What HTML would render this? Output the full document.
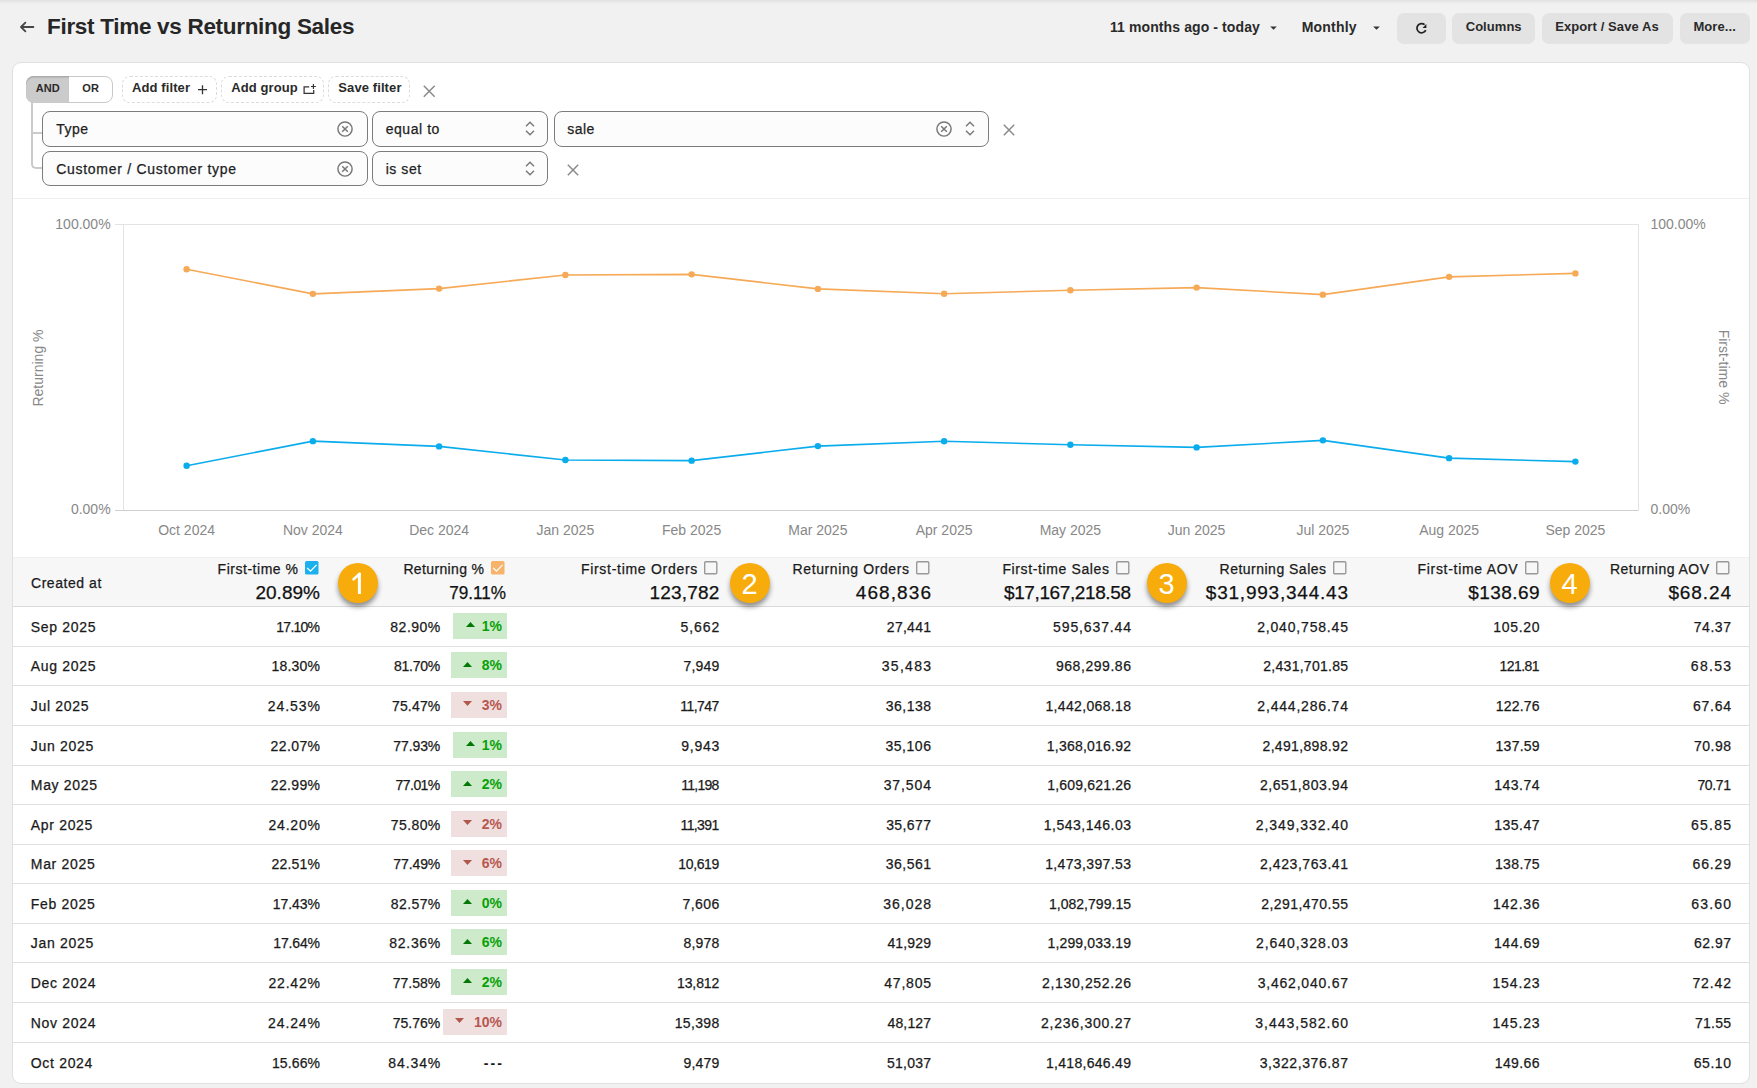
<!DOCTYPE html>
<html><head><meta charset="utf-8"><style>
html,body{margin:0;padding:0;}
body{width:1757px;height:1088px;overflow:hidden;background:#f1f1f1;position:relative;font-family:"Liberation Sans",sans-serif;}
.a{position:absolute;}
.t{position:absolute;white-space:nowrap;}
.k{-webkit-text-stroke:0.25px currentColor;}
svg.a{overflow:visible;}
</style></head><body>
<div class="a" style="left:0px;top:0px;width:1757px;height:4px;background:linear-gradient(#e1e1e1,#f1f1f1);"></div>
<svg class="a" style="left:18px;top:19px" width="18" height="16" viewBox="0 0 18 16"><path d="M15.4 8H3.2M7.4 3.6L3 8L7.4 12.4" fill="none" stroke="#464646" stroke-width="1.8" stroke-linecap="round" stroke-linejoin="round"/></svg>
<div class="t " style="top:12.50px;font-size:22.5px;line-height:28.12px;font-weight:700;color:#262626;letter-spacing:-0.301px;left:47.00px;">First Time vs Returning Sales</div>
<div class="t " style="top:19.00px;font-size:14px;line-height:17.5px;font-weight:700;color:#2a2a2a;letter-spacing:0.1px;left:1110.00px;">11 months ago - today</div>
<svg class="a" style="left:1269px;top:25px" width="9" height="6"><path d="M1.2 1.6H7.8L4.5 4.8z" fill="#333"/></svg>
<div class="t " style="top:19.00px;font-size:14px;line-height:17.5px;font-weight:700;color:#2a2a2a;letter-spacing:0.2px;left:1301.70px;">Monthly</div>
<svg class="a" style="left:1372px;top:25px" width="9" height="6"><path d="M1.2 1.6H7.8L4.5 4.8z" fill="#333"/></svg>
<div class="a" style="left:1397px;top:13px;width:49px;height:31px;background:#e3e3e3;border-radius:7px;"></div>
<div class="a" style="left:1452px;top:13px;width:83px;height:31px;background:#e3e3e3;border-radius:7px;"></div>
<div class="a" style="left:1542px;top:13px;width:131px;height:31px;background:#e3e3e3;border-radius:7px;"></div>
<div class="a" style="left:1680px;top:13px;width:70px;height:31px;background:#e3e3e3;border-radius:7px;"></div>
<svg class="a" style="left:1413px;top:21px" width="16" height="14" viewBox="0 0 16 14"><path d="M12.76 9.03A4.6 4.6 0 1 1 11.6 3.7" fill="none" stroke="#222" stroke-width="1.75"/><path d="M9.5 6.9L13.4 6.9L13.4 2.9z" fill="#222"/></svg>
<div class="t " style="top:19.00px;font-size:13px;line-height:16.25px;font-weight:700;color:#2a2a2a;letter-spacing:0.05px;left:1465.70px;">Columns</div>
<div class="t " style="top:19.00px;font-size:13px;line-height:16.25px;font-weight:700;color:#2a2a2a;letter-spacing:0.1px;left:1555.20px;">Export / Save As</div>
<div class="t " style="top:19.00px;font-size:13px;line-height:16.25px;font-weight:700;color:#2a2a2a;letter-spacing:0.1px;left:1693.40px;">More...</div>
<div class="a" style="left:12px;top:62px;width:1738px;height:1022px;background:#fff;border:1px solid #e0e0e0;border-radius:9px;box-sizing:border-box;"></div>
<div class="a" style="left:26px;top:76px;width:86.5px;height:26.5px;background:#fff;border:1px solid #c9c9c9;border-radius:8px;box-sizing:border-box;overflow:hidden;"></div>
<div class="a" style="left:26px;top:76px;width:43px;height:26.5px;background:#cbcbcb;border-radius:8px 0 0 8px;box-shadow:inset 0 1.5px 1px #a9a9a9;"></div>
<div class="t " style="top:82.00px;font-size:11px;line-height:13.75px;font-weight:700;color:#2a2a2a;letter-spacing:0.1px;left:-352.25px;width:800px;text-align:center;">AND</div>
<div class="t " style="top:82.00px;font-size:11px;line-height:13.75px;font-weight:700;color:#2a2a2a;letter-spacing:0.2px;left:-309.30px;width:800px;text-align:center;">OR</div>
<div class="a" style="left:121.5px;top:76px;width:95.30000000000001px;height:27px;border:1px dashed #dcdcdc;border-radius:8px;box-sizing:border-box;"></div>
<div class="a" style="left:221.2px;top:76px;width:103.0px;height:27px;border:1px dashed #dcdcdc;border-radius:8px;box-sizing:border-box;"></div>
<div class="a" style="left:328.2px;top:76px;width:82.0px;height:27px;border:1px dashed #dcdcdc;border-radius:8px;box-sizing:border-box;"></div>
<div class="t " style="top:80.00px;font-size:13px;line-height:16.25px;font-weight:700;color:#2a2a2a;letter-spacing:0.1px;left:132.00px;">Add filter</div>
<svg class="a" style="left:197px;top:84px" width="11" height="11"><path d="M5.5 1.2V10.2M1 5.7H10" stroke="#333" stroke-width="1.3"/></svg>
<div class="t " style="top:80.00px;font-size:13px;line-height:16.25px;font-weight:700;color:#2a2a2a;letter-spacing:0.1px;left:231.30px;">Add group</div>
<svg class="a" style="left:303px;top:83px" width="14" height="12"><path d="M6.2 3.8H1.1V10.4H10.7V7" fill="none" stroke="#333" stroke-width="1.25"/><path d="M10.4 1.1V5.9M8 3.5H12.8" stroke="#333" stroke-width="1.15"/></svg>
<div class="t " style="top:80.00px;font-size:13px;line-height:16.25px;font-weight:700;color:#2a2a2a;letter-spacing:0.1px;left:338.30px;">Save filter</div>
<svg class="a" style="left:423px;top:84.5px" width="12.5" height="12.5"><path d="M0.8 0.8L11.7 11.7M11.7 0.8L0.8 11.7" stroke="#8a8a8a" stroke-width="1.5"/></svg>
<div class="a" style="left:31px;top:102px;width:11px;height:66.5px;border-left:2px solid #cacaca;border-bottom:2px solid #cacaca;border-bottom-left-radius:5px;box-sizing:border-box;"></div>
<div class="a" style="left:31px;top:132px;width:11px;height:2px;background:#cacaca;"></div>
<div class="a" style="left:42px;top:111px;width:325.5px;height:36px;background:#fcfcfd;border:1px solid #7c7c7c;border-radius:8px;box-sizing:border-box;"></div>
<div class="a" style="left:372.4px;top:111px;width:176.0px;height:36px;background:#fcfcfd;border:1px solid #7c7c7c;border-radius:8px;box-sizing:border-box;"></div>
<div class="a" style="left:554.2px;top:111px;width:434.5999999999999px;height:36px;background:#fcfcfd;border:1px solid #7c7c7c;border-radius:8px;box-sizing:border-box;"></div>
<div class="a" style="left:42px;top:151px;width:325.5px;height:34.5px;background:#fcfcfd;border:1px solid #7c7c7c;border-radius:8px;box-sizing:border-box;"></div>
<div class="a" style="left:372.4px;top:151px;width:176.0px;height:34.5px;background:#fcfcfd;border:1px solid #7c7c7c;border-radius:8px;box-sizing:border-box;"></div>
<div class="t k" style="top:121.00px;font-size:14px;line-height:17.5px;font-weight:400;color:#1e1e1e;letter-spacing:0.5px;left:56.20px;">Type</div>
<div class="t k" style="top:161.00px;font-size:14px;line-height:17.5px;font-weight:400;color:#1e1e1e;letter-spacing:0.72px;left:56.20px;">Customer / Customer type</div>
<div class="t k" style="top:121.00px;font-size:14px;line-height:17.5px;font-weight:400;color:#1e1e1e;letter-spacing:0.55px;left:385.70px;">equal to</div>
<div class="t k" style="top:161.00px;font-size:14px;line-height:17.5px;font-weight:400;color:#1e1e1e;letter-spacing:0.55px;left:385.70px;">is set</div>
<div class="t k" style="top:121.00px;font-size:14px;line-height:17.5px;font-weight:400;color:#1e1e1e;letter-spacing:0.5px;left:567.20px;">sale</div>
<svg class="a" style="left:336px;top:119.80000000000001px" width="18" height="18"><circle cx="9" cy="9" r="7.1" fill="none" stroke="#777" stroke-width="1.45"/><path d="M6.2 6.2L11.8 11.8M11.8 6.2L6.2 11.8" stroke="#777" stroke-width="1.5"/></svg>
<svg class="a" style="left:336px;top:159.6px" width="18" height="18"><circle cx="9" cy="9" r="7.1" fill="none" stroke="#777" stroke-width="1.45"/><path d="M6.2 6.2L11.8 11.8M11.8 6.2L6.2 11.8" stroke="#777" stroke-width="1.5"/></svg>
<svg class="a" style="left:935.3px;top:119.69999999999999px" width="18" height="18"><circle cx="9" cy="9" r="7.1" fill="none" stroke="#777" stroke-width="1.45"/><path d="M6.2 6.2L11.8 11.8M11.8 6.2L6.2 11.8" stroke="#777" stroke-width="1.5"/></svg>
<svg class="a" style="left:525px;top:121.4px" width="10" height="15"><path d="M1 5.2L5 1.2L9 5.2M1 9.8L5 13.8L9 9.8" fill="none" stroke="#777" stroke-width="1.4"/></svg>
<svg class="a" style="left:525px;top:161.0px" width="10" height="15"><path d="M1 5.2L5 1.2L9 5.2M1 9.8L5 13.8L9 9.8" fill="none" stroke="#777" stroke-width="1.4"/></svg>
<svg class="a" style="left:965px;top:121.4px" width="10" height="15"><path d="M1 5.2L5 1.2L9 5.2M1 9.8L5 13.8L9 9.8" fill="none" stroke="#777" stroke-width="1.4"/></svg>
<svg class="a" style="left:1002.8px;top:124.3px" width="12" height="12"><path d="M0.8 0.8L11.2 11.2M11.2 0.8L0.8 11.2" stroke="#8a8a8a" stroke-width="1.5"/></svg>
<svg class="a" style="left:567px;top:164px" width="12" height="12"><path d="M0.8 0.8L11.2 11.2M11.2 0.8L0.8 11.2" stroke="#8a8a8a" stroke-width="1.5"/></svg>
<div class="a" style="left:13px;top:198px;width:1736px;height:1px;background:#eeeeee;"></div>
<svg class="a" style="left:0;top:0" width="1757" height="1088"><path d="M115 224.5H1638.5V510.5" fill="none" stroke="#e3e3e3" stroke-width="1"/><path d="M123.5 224.5V510.5" fill="none" stroke="#e3e3e3" stroke-width="1"/><path d="M115 510.5H1638.5" fill="none" stroke="#cfcfcf" stroke-width="1"/><polyline points="186.62,269.29 312.88,293.83 439.12,288.62 565.38,274.95 691.62,274.35 817.88,288.88 944.12,293.71 1070.38,290.25 1196.62,287.62 1322.88,294.66 1449.12,276.84 1575.38,273.41" fill="none" stroke="#f6a956" stroke-width="1.6"/><circle cx="186.62" cy="269.29" r="3.2" fill="#f6a956"/><circle cx="312.88" cy="293.83" r="3.2" fill="#f6a956"/><circle cx="439.12" cy="288.62" r="3.2" fill="#f6a956"/><circle cx="565.38" cy="274.95" r="3.2" fill="#f6a956"/><circle cx="691.62" cy="274.35" r="3.2" fill="#f6a956"/><circle cx="817.88" cy="288.88" r="3.2" fill="#f6a956"/><circle cx="944.12" cy="293.71" r="3.2" fill="#f6a956"/><circle cx="1070.38" cy="290.25" r="3.2" fill="#f6a956"/><circle cx="1196.62" cy="287.62" r="3.2" fill="#f6a956"/><circle cx="1322.88" cy="294.66" r="3.2" fill="#f6a956"/><circle cx="1449.12" cy="276.84" r="3.2" fill="#f6a956"/><circle cx="1575.38" cy="273.41" r="3.2" fill="#f6a956"/><polyline points="186.62,465.71 312.88,441.17 439.12,446.38 565.38,460.05 691.62,460.65 817.88,446.12 944.12,441.29 1070.38,444.75 1196.62,447.38 1322.88,440.34 1449.12,458.16 1575.38,461.59" fill="none" stroke="#0aacec" stroke-width="1.6"/><circle cx="186.62" cy="465.71" r="3.2" fill="#0aacec"/><circle cx="312.88" cy="441.17" r="3.2" fill="#0aacec"/><circle cx="439.12" cy="446.38" r="3.2" fill="#0aacec"/><circle cx="565.38" cy="460.05" r="3.2" fill="#0aacec"/><circle cx="691.62" cy="460.65" r="3.2" fill="#0aacec"/><circle cx="817.88" cy="446.12" r="3.2" fill="#0aacec"/><circle cx="944.12" cy="441.29" r="3.2" fill="#0aacec"/><circle cx="1070.38" cy="444.75" r="3.2" fill="#0aacec"/><circle cx="1196.62" cy="447.38" r="3.2" fill="#0aacec"/><circle cx="1322.88" cy="440.34" r="3.2" fill="#0aacec"/><circle cx="1449.12" cy="458.16" r="3.2" fill="#0aacec"/><circle cx="1575.38" cy="461.59" r="3.2" fill="#0aacec"/></svg>
<div class="t " style="top:216.00px;font-size:14px;line-height:17.5px;font-weight:400;color:#888;left:-689.40px;width:800px;text-align:right;">100.00%</div>
<div class="t " style="top:501.00px;font-size:14px;line-height:17.5px;font-weight:400;color:#888;left:-689.40px;width:800px;text-align:right;">0.00%</div>
<div class="t " style="top:216.00px;font-size:14px;line-height:17.5px;font-weight:400;color:#888;left:1650.50px;">100.00%</div>
<div class="t " style="top:501.00px;font-size:14px;line-height:17.5px;font-weight:400;color:#888;left:1650.50px;">0.00%</div>
<div class="t " style="top:522.00px;font-size:14px;line-height:17.5px;font-weight:400;color:#888;left:-213.38px;width:800px;text-align:center;">Oct 2024</div>
<div class="t " style="top:522.00px;font-size:14px;line-height:17.5px;font-weight:400;color:#888;left:-87.12px;width:800px;text-align:center;">Nov 2024</div>
<div class="t " style="top:522.00px;font-size:14px;line-height:17.5px;font-weight:400;color:#888;left:39.12px;width:800px;text-align:center;">Dec 2024</div>
<div class="t " style="top:522.00px;font-size:14px;line-height:17.5px;font-weight:400;color:#888;left:165.38px;width:800px;text-align:center;">Jan 2025</div>
<div class="t " style="top:522.00px;font-size:14px;line-height:17.5px;font-weight:400;color:#888;left:291.62px;width:800px;text-align:center;">Feb 2025</div>
<div class="t " style="top:522.00px;font-size:14px;line-height:17.5px;font-weight:400;color:#888;left:417.88px;width:800px;text-align:center;">Mar 2025</div>
<div class="t " style="top:522.00px;font-size:14px;line-height:17.5px;font-weight:400;color:#888;left:544.12px;width:800px;text-align:center;">Apr 2025</div>
<div class="t " style="top:522.00px;font-size:14px;line-height:17.5px;font-weight:400;color:#888;left:670.38px;width:800px;text-align:center;">May 2025</div>
<div class="t " style="top:522.00px;font-size:14px;line-height:17.5px;font-weight:400;color:#888;left:796.62px;width:800px;text-align:center;">Jun 2025</div>
<div class="t " style="top:522.00px;font-size:14px;line-height:17.5px;font-weight:400;color:#888;left:922.88px;width:800px;text-align:center;">Jul 2025</div>
<div class="t " style="top:522.00px;font-size:14px;line-height:17.5px;font-weight:400;color:#888;left:1049.12px;width:800px;text-align:center;">Aug 2025</div>
<div class="t " style="top:522.00px;font-size:14px;line-height:17.5px;font-weight:400;color:#888;left:1175.38px;width:800px;text-align:center;">Sep 2025</div>
<div class="t" style="left:38px;top:367.8px;font-size:14px;line-height:14px;color:#888;transform:translate(-50%,-50%) rotate(-90deg);">Returning %</div>
<div class="t" style="left:1724px;top:367.2px;font-size:14px;line-height:14px;color:#888;transform:translate(-50%,-50%) rotate(90deg);">First-time %</div>
<div class="a" style="left:13px;top:557px;width:1736px;height:1px;background:#efefef;"></div>
<div class="a" style="left:13px;top:558px;width:1736px;height:48px;background:#f7f7f7;"></div>
<div class="a" style="left:13px;top:606px;width:1736px;height:1px;background:#d9d9d9;"></div>
<div class="t k" style="top:575.00px;font-size:14px;line-height:17.5px;font-weight:400;color:#1a1a1a;letter-spacing:0.55px;left:31.00px;">Created at</div>
<svg class="a" style="left:305px;top:561px" width="13.5" height="13.5"><rect width="13.5" height="13.5" rx="1.5" fill="#1cb1ee"/><path d="M2.1 6.9L5.5 10.2L11.6 3.9" fill="none" stroke="#fff" stroke-width="1.3"/></svg>
<div class="t k" style="top:561.00px;font-size:14px;line-height:17.5px;font-weight:400;color:#1a1a1a;letter-spacing:0.522px;left:-501.48px;width:800px;text-align:right;">First-time %</div>
<div class="t k" style="top:581.00px;font-size:19px;line-height:23.75px;font-weight:400;color:#111;letter-spacing:0.032px;left:-479.97px;width:800px;text-align:right;">20.89%</div>
<svg class="a" style="left:491px;top:561px" width="13.5" height="13.5"><rect width="13.5" height="13.5" rx="1.5" fill="#f8b36b"/><path d="M2.1 6.9L5.5 10.2L11.6 3.9" fill="none" stroke="#fff" stroke-width="1.3"/></svg>
<div class="t k" style="top:561.00px;font-size:14px;line-height:17.5px;font-weight:400;color:#1a1a1a;letter-spacing:0.356px;left:-315.64px;width:800px;text-align:right;">Returning %</div>
<div class="t k" style="top:581.00px;font-size:19px;line-height:23.75px;font-weight:400;color:#111;left:-294.00px;width:800px;text-align:right;transform:scaleX(0.9011);transform-origin:100% 50%;">79.11%</div>
<svg class="a" style="left:704.3px;top:561px" width="13.5" height="13.5"><rect x="0.7" y="0.7" width="12.1" height="12.1" rx="1" fill="none" stroke="#999" stroke-width="1.4"/></svg>
<div class="t k" style="top:561.00px;font-size:14px;line-height:17.5px;font-weight:400;color:#1a1a1a;letter-spacing:0.713px;left:-101.99px;width:800px;text-align:right;">First-time Orders</div>
<div class="t k" style="top:581.00px;font-size:19px;line-height:23.75px;font-weight:400;color:#111;letter-spacing:0.203px;left:-80.50px;width:800px;text-align:right;">123,782</div>
<svg class="a" style="left:916px;top:561px" width="13.5" height="13.5"><rect x="0.7" y="0.7" width="12.1" height="12.1" rx="1" fill="none" stroke="#999" stroke-width="1.4"/></svg>
<div class="t k" style="top:561.00px;font-size:14px;line-height:17.5px;font-weight:400;color:#1a1a1a;letter-spacing:0.601px;left:109.60px;width:800px;text-align:right;">Returning Orders</div>
<div class="t k" style="top:581.00px;font-size:19px;line-height:23.75px;font-weight:400;color:#111;letter-spacing:1.086px;left:132.09px;width:800px;text-align:right;">468,836</div>
<svg class="a" style="left:1116px;top:561px" width="13.5" height="13.5"><rect x="0.7" y="0.7" width="12.1" height="12.1" rx="1" fill="none" stroke="#999" stroke-width="1.4"/></svg>
<div class="t k" style="top:561.00px;font-size:14px;line-height:17.5px;font-weight:400;color:#1a1a1a;letter-spacing:0.624px;left:309.62px;width:800px;text-align:right;">First-time Sales</div>
<div class="t k" style="top:581.00px;font-size:19px;line-height:23.75px;font-weight:400;color:#111;letter-spacing:-0.39px;left:330.61px;width:800px;text-align:right;">$17,167,218.58</div>
<svg class="a" style="left:1333px;top:561px" width="13.5" height="13.5"><rect x="0.7" y="0.7" width="12.1" height="12.1" rx="1" fill="none" stroke="#999" stroke-width="1.4"/></svg>
<div class="t k" style="top:561.00px;font-size:14px;line-height:17.5px;font-weight:400;color:#1a1a1a;letter-spacing:0.485px;left:526.49px;width:800px;text-align:right;">Returning Sales</div>
<div class="t k" style="top:581.00px;font-size:19px;line-height:23.75px;font-weight:400;color:#111;letter-spacing:0.779px;left:548.78px;width:800px;text-align:right;">$31,993,344.43</div>
<svg class="a" style="left:1524.6px;top:561px" width="13.5" height="13.5"><rect x="0.7" y="0.7" width="12.1" height="12.1" rx="1" fill="none" stroke="#999" stroke-width="1.4"/></svg>
<div class="t k" style="top:561.00px;font-size:14px;line-height:17.5px;font-weight:400;color:#1a1a1a;letter-spacing:0.7px;left:718.30px;width:800px;text-align:right;">First-time AOV</div>
<div class="t k" style="top:581.00px;font-size:19px;line-height:23.75px;font-weight:400;color:#111;letter-spacing:0.436px;left:740.04px;width:800px;text-align:right;">$138.69</div>
<svg class="a" style="left:1716px;top:561px" width="13.5" height="13.5"><rect x="0.7" y="0.7" width="12.1" height="12.1" rx="1" fill="none" stroke="#999" stroke-width="1.4"/></svg>
<div class="t k" style="top:561.00px;font-size:14px;line-height:17.5px;font-weight:400;color:#1a1a1a;letter-spacing:0.468px;left:909.47px;width:800px;text-align:right;">Returning AOV</div>
<div class="t k" style="top:581.00px;font-size:19px;line-height:23.75px;font-weight:400;color:#111;letter-spacing:0.897px;left:931.90px;width:800px;text-align:right;">$68.24</div>
<div class="a" style="left:338px;top:563px;width:40px;height:40px;border-radius:50%;background:#f8ac0b;box-shadow:0 4px 5px rgba(0,0,0,0.42);"></div>
<svg class="a" style="left:0;top:0" width="1" height="1"><path d="M359.4 572.9V594" stroke="#fff" stroke-width="3"/><path d="M359.7 573.8L353.6 579.3" stroke="#fff" stroke-width="2.6" stroke-linecap="round"/></svg>
<div class="a" style="left:730px;top:563px;width:40px;height:40px;border-radius:50%;background:#f8ac0b;box-shadow:0 4px 5px rgba(0,0,0,0.42);"></div>
<div class="t " style="top:566.00px;font-size:29px;line-height:36.25px;font-weight:400;color:#fff;left:349.50px;width:800px;text-align:center;">2</div>
<div class="a" style="left:1147px;top:563px;width:40px;height:40px;border-radius:50%;background:#f8ac0b;box-shadow:0 4px 5px rgba(0,0,0,0.42);"></div>
<div class="t " style="top:566.00px;font-size:29px;line-height:36.25px;font-weight:400;color:#fff;left:766.50px;width:800px;text-align:center;">3</div>
<div class="a" style="left:1550px;top:563px;width:40px;height:40px;border-radius:50%;background:#f8ac0b;box-shadow:0 4px 5px rgba(0,0,0,0.42);"></div>
<div class="t " style="top:566.00px;font-size:29px;line-height:36.25px;font-weight:400;color:#fff;left:1169.50px;width:800px;text-align:center;">4</div>
<div class="a" style="left:13px;top:646px;width:1736px;height:1px;background:#e0e0e0;"></div>
<div class="t k" style="top:619.00px;font-size:14px;line-height:17.5px;font-weight:400;color:#1a1a1a;letter-spacing:0.68px;left:30.80px;">Sep 2025</div>
<div class="t k" style="top:619.00px;font-size:14px;line-height:17.5px;font-weight:400;color:#1a1a1a;letter-spacing:-0.762px;left:-480.76px;width:800px;text-align:right;">17.10%</div>
<div class="t k" style="top:619.00px;font-size:14px;line-height:17.5px;font-weight:400;color:#1a1a1a;letter-spacing:0.494px;left:-359.21px;width:800px;text-align:right;">82.90%</div>
<div class="a" style="left:452.9px;top:613px;width:54px;height:26px;background:#cdebcb;"></div>
<div class="t " style="top:618.00px;font-size:14px;line-height:17.5px;font-weight:700;color:#08a008;left:-298.00px;width:800px;text-align:right;">1%</div>
<svg class="a" style="left:465.90px;top:622.00px" width="9" height="5"><path d="M0 5L4.5 0L9 5z" fill="#047804"/></svg>
<div class="t k" style="top:619.00px;font-size:14px;line-height:17.5px;font-weight:400;color:#1a1a1a;letter-spacing:0.944px;left:-79.76px;width:800px;text-align:right;">5,662</div>
<div class="t k" style="top:619.00px;font-size:14px;line-height:17.5px;font-weight:400;color:#1a1a1a;letter-spacing:0.266px;left:131.27px;width:800px;text-align:right;">27,441</div>
<div class="t k" style="top:619.00px;font-size:14px;line-height:17.5px;font-weight:400;color:#1a1a1a;letter-spacing:0.869px;left:331.87px;width:800px;text-align:right;">595,637.44</div>
<div class="t k" style="top:619.00px;font-size:14px;line-height:17.5px;font-weight:400;color:#1a1a1a;letter-spacing:0.824px;left:548.82px;width:800px;text-align:right;">2,040,758.45</div>
<div class="t k" style="top:619.00px;font-size:14px;line-height:17.5px;font-weight:400;color:#1a1a1a;letter-spacing:0.712px;left:740.31px;width:800px;text-align:right;">105.20</div>
<div class="t k" style="top:619.00px;font-size:14px;line-height:17.5px;font-weight:400;color:#1a1a1a;letter-spacing:0.544px;left:931.54px;width:800px;text-align:right;">74.37</div>
<div class="a" style="left:13px;top:685px;width:1736px;height:1px;background:#e0e0e0;"></div>
<div class="t k" style="top:658.00px;font-size:14px;line-height:17.5px;font-weight:400;color:#1a1a1a;letter-spacing:0.68px;left:30.80px;">Aug 2025</div>
<div class="t k" style="top:658.00px;font-size:14px;line-height:17.5px;font-weight:400;color:#1a1a1a;letter-spacing:0.186px;left:-479.81px;width:800px;text-align:right;">18.30%</div>
<div class="t k" style="top:658.00px;font-size:14px;line-height:17.5px;font-weight:400;color:#1a1a1a;letter-spacing:-0.244px;left:-359.94px;width:800px;text-align:right;">81.70%</div>
<div class="a" style="left:450.9px;top:652px;width:56px;height:26px;background:#cdebcb;"></div>
<div class="t " style="top:657.00px;font-size:14px;line-height:17.5px;font-weight:700;color:#08a008;left:-298.00px;width:800px;text-align:right;">8%</div>
<svg class="a" style="left:462.90px;top:661.50px" width="9" height="5"><path d="M0 5L4.5 0L9 5z" fill="#047804"/></svg>
<div class="t k" style="top:658.00px;font-size:14px;line-height:17.5px;font-weight:400;color:#1a1a1a;letter-spacing:0.192px;left:-80.51px;width:800px;text-align:right;">7,949</div>
<div class="t k" style="top:658.00px;font-size:14px;line-height:17.5px;font-weight:400;color:#1a1a1a;letter-spacing:1.274px;left:132.27px;width:800px;text-align:right;">35,483</div>
<div class="t k" style="top:658.00px;font-size:14px;line-height:17.5px;font-weight:400;color:#1a1a1a;letter-spacing:0.555px;left:331.56px;width:800px;text-align:right;">968,299.86</div>
<div class="t k" style="top:658.00px;font-size:14px;line-height:17.5px;font-weight:400;color:#1a1a1a;letter-spacing:0.267px;left:548.27px;width:800px;text-align:right;">2,431,701.85</div>
<div class="t k" style="top:658.00px;font-size:14px;line-height:17.5px;font-weight:400;color:#1a1a1a;letter-spacing:-0.562px;left:739.04px;width:800px;text-align:right;">121.81</div>
<div class="t k" style="top:658.00px;font-size:14px;line-height:17.5px;font-weight:400;color:#1a1a1a;letter-spacing:1.272px;left:932.27px;width:800px;text-align:right;">68.53</div>
<div class="a" style="left:13px;top:725px;width:1736px;height:1px;background:#e0e0e0;"></div>
<div class="t k" style="top:698.00px;font-size:14px;line-height:17.5px;font-weight:400;color:#1a1a1a;letter-spacing:0.68px;left:30.80px;">Jul 2025</div>
<div class="t k" style="top:698.00px;font-size:14px;line-height:17.5px;font-weight:400;color:#1a1a1a;letter-spacing:0.96px;left:-479.04px;width:800px;text-align:right;">24.53%</div>
<div class="t k" style="top:698.00px;font-size:14px;line-height:17.5px;font-weight:400;color:#1a1a1a;letter-spacing:0.176px;left:-359.52px;width:800px;text-align:right;">75.47%</div>
<div class="a" style="left:450.9px;top:692px;width:56px;height:26px;background:#f0dfdf;"></div>
<div class="t " style="top:697.00px;font-size:14px;line-height:17.5px;font-weight:700;color:#b6584f;left:-298.00px;width:800px;text-align:right;">3%</div>
<svg class="a" style="left:462.90px;top:701.00px" width="9" height="5"><path d="M0 0L4.5 5L9 0z" fill="#b0584e"/></svg>
<div class="t k" style="top:698.00px;font-size:14px;line-height:17.5px;font-weight:400;color:#1a1a1a;letter-spacing:-0.536px;left:-81.24px;width:800px;text-align:right;">11,747</div>
<div class="t k" style="top:698.00px;font-size:14px;line-height:17.5px;font-weight:400;color:#1a1a1a;letter-spacing:0.494px;left:131.49px;width:800px;text-align:right;">36,138</div>
<div class="t k" style="top:698.00px;font-size:14px;line-height:17.5px;font-weight:400;color:#1a1a1a;letter-spacing:0.351px;left:331.35px;width:800px;text-align:right;">1,442,068.18</div>
<div class="t k" style="top:698.00px;font-size:14px;line-height:17.5px;font-weight:400;color:#1a1a1a;letter-spacing:0.809px;left:548.81px;width:800px;text-align:right;">2,444,286.74</div>
<div class="t k" style="top:698.00px;font-size:14px;line-height:17.5px;font-weight:400;color:#1a1a1a;letter-spacing:0.226px;left:739.83px;width:800px;text-align:right;">122.76</div>
<div class="t k" style="top:698.00px;font-size:14px;line-height:17.5px;font-weight:400;color:#1a1a1a;letter-spacing:0.752px;left:931.75px;width:800px;text-align:right;">67.64</div>
<div class="a" style="left:13px;top:765px;width:1736px;height:1px;background:#e0e0e0;"></div>
<div class="t k" style="top:738.00px;font-size:14px;line-height:17.5px;font-weight:400;color:#1a1a1a;letter-spacing:0.68px;left:30.80px;">Jun 2025</div>
<div class="t k" style="top:738.00px;font-size:14px;line-height:17.5px;font-weight:400;color:#1a1a1a;letter-spacing:0.382px;left:-479.62px;width:800px;text-align:right;">22.07%</div>
<div class="t k" style="top:738.00px;font-size:14px;line-height:17.5px;font-weight:400;color:#1a1a1a;letter-spacing:-0.088px;left:-359.79px;width:800px;text-align:right;">77.93%</div>
<div class="a" style="left:452.9px;top:732px;width:54px;height:26px;background:#cdebcb;"></div>
<div class="t " style="top:737.00px;font-size:14px;line-height:17.5px;font-weight:700;color:#08a008;left:-298.00px;width:800px;text-align:right;">1%</div>
<svg class="a" style="left:465.90px;top:741.00px" width="9" height="5"><path d="M0 5L4.5 0L9 5z" fill="#047804"/></svg>
<div class="t k" style="top:738.00px;font-size:14px;line-height:17.5px;font-weight:400;color:#1a1a1a;letter-spacing:0.729px;left:-79.97px;width:800px;text-align:right;">9,943</div>
<div class="t k" style="top:738.00px;font-size:14px;line-height:17.5px;font-weight:400;color:#1a1a1a;letter-spacing:0.544px;left:131.54px;width:800px;text-align:right;">35,106</div>
<div class="t k" style="top:738.00px;font-size:14px;line-height:17.5px;font-weight:400;color:#1a1a1a;letter-spacing:0.223px;left:331.22px;width:800px;text-align:right;">1,368,016.92</div>
<div class="t k" style="top:738.00px;font-size:14px;line-height:17.5px;font-weight:400;color:#1a1a1a;letter-spacing:0.34px;left:548.34px;width:800px;text-align:right;">2,491,898.92</div>
<div class="t k" style="top:738.00px;font-size:14px;line-height:17.5px;font-weight:400;color:#1a1a1a;letter-spacing:0.238px;left:739.84px;width:800px;text-align:right;">137.59</div>
<div class="t k" style="top:738.00px;font-size:14px;line-height:17.5px;font-weight:400;color:#1a1a1a;letter-spacing:0.489px;left:931.49px;width:800px;text-align:right;">70.98</div>
<div class="a" style="left:13px;top:804px;width:1736px;height:1px;background:#e0e0e0;"></div>
<div class="t k" style="top:777.00px;font-size:14px;line-height:17.5px;font-weight:400;color:#1a1a1a;letter-spacing:0.68px;left:30.80px;">May 2025</div>
<div class="t k" style="top:777.00px;font-size:14px;line-height:17.5px;font-weight:400;color:#1a1a1a;letter-spacing:0.356px;left:-479.64px;width:800px;text-align:right;">22.99%</div>
<div class="t k" style="top:777.00px;font-size:14px;line-height:17.5px;font-weight:400;color:#1a1a1a;letter-spacing:-0.544px;left:-360.24px;width:800px;text-align:right;">77.01%</div>
<div class="a" style="left:450.9px;top:771px;width:56px;height:26px;background:#cdebcb;"></div>
<div class="t " style="top:776.00px;font-size:14px;line-height:17.5px;font-weight:700;color:#08a008;left:-298.00px;width:800px;text-align:right;">2%</div>
<svg class="a" style="left:462.90px;top:780.50px" width="9" height="5"><path d="M0 5L4.5 0L9 5z" fill="#047804"/></svg>
<div class="t k" style="top:777.00px;font-size:14px;line-height:17.5px;font-weight:400;color:#1a1a1a;letter-spacing:-0.726px;left:-81.43px;width:800px;text-align:right;">11,198</div>
<div class="t k" style="top:777.00px;font-size:14px;line-height:17.5px;font-weight:400;color:#1a1a1a;letter-spacing:0.902px;left:131.90px;width:800px;text-align:right;">37,504</div>
<div class="t k" style="top:777.00px;font-size:14px;line-height:17.5px;font-weight:400;color:#1a1a1a;letter-spacing:0.187px;left:331.19px;width:800px;text-align:right;">1,609,621.26</div>
<div class="t k" style="top:777.00px;font-size:14px;line-height:17.5px;font-weight:400;color:#1a1a1a;letter-spacing:0.577px;left:548.58px;width:800px;text-align:right;">2,651,803.94</div>
<div class="t k" style="top:777.00px;font-size:14px;line-height:17.5px;font-weight:400;color:#1a1a1a;letter-spacing:0.526px;left:740.13px;width:800px;text-align:right;">143.74</div>
<div class="t k" style="top:777.00px;font-size:14px;line-height:17.5px;font-weight:400;color:#1a1a1a;letter-spacing:-0.366px;left:930.63px;width:800px;text-align:right;">70.71</div>
<div class="a" style="left:13px;top:844px;width:1736px;height:1px;background:#e0e0e0;"></div>
<div class="t k" style="top:817.00px;font-size:14px;line-height:17.5px;font-weight:400;color:#1a1a1a;letter-spacing:0.68px;left:30.80px;">Apr 2025</div>
<div class="t k" style="top:817.00px;font-size:14px;line-height:17.5px;font-weight:400;color:#1a1a1a;letter-spacing:0.82px;left:-479.18px;width:800px;text-align:right;">24.20%</div>
<div class="t k" style="top:817.00px;font-size:14px;line-height:17.5px;font-weight:400;color:#1a1a1a;letter-spacing:0.396px;left:-359.30px;width:800px;text-align:right;">75.80%</div>
<div class="a" style="left:450.9px;top:811px;width:56px;height:26px;background:#f0dfdf;"></div>
<div class="t " style="top:816.00px;font-size:14px;line-height:17.5px;font-weight:700;color:#b6584f;left:-298.00px;width:800px;text-align:right;">2%</div>
<svg class="a" style="left:462.90px;top:820.00px" width="9" height="5"><path d="M0 0L4.5 5L9 0z" fill="#b0584e"/></svg>
<div class="t k" style="top:817.00px;font-size:14px;line-height:17.5px;font-weight:400;color:#1a1a1a;letter-spacing:-0.596px;left:-81.30px;width:800px;text-align:right;">11,391</div>
<div class="t k" style="top:817.00px;font-size:14px;line-height:17.5px;font-weight:400;color:#1a1a1a;letter-spacing:0.404px;left:131.40px;width:800px;text-align:right;">35,677</div>
<div class="t k" style="top:817.00px;font-size:14px;line-height:17.5px;font-weight:400;color:#1a1a1a;letter-spacing:0.5px;left:331.50px;width:800px;text-align:right;">1,543,146.03</div>
<div class="t k" style="top:817.00px;font-size:14px;line-height:17.5px;font-weight:400;color:#1a1a1a;letter-spacing:0.964px;left:548.96px;width:800px;text-align:right;">2,349,332.40</div>
<div class="t k" style="top:817.00px;font-size:14px;line-height:17.5px;font-weight:400;color:#1a1a1a;letter-spacing:0.51px;left:740.11px;width:800px;text-align:right;">135.47</div>
<div class="t k" style="top:817.00px;font-size:14px;line-height:17.5px;font-weight:400;color:#1a1a1a;letter-spacing:1.262px;left:932.26px;width:800px;text-align:right;">65.85</div>
<div class="a" style="left:13px;top:883px;width:1736px;height:1px;background:#e0e0e0;"></div>
<div class="t k" style="top:856.00px;font-size:14px;line-height:17.5px;font-weight:400;color:#1a1a1a;letter-spacing:0.68px;left:30.80px;">Mar 2025</div>
<div class="t k" style="top:856.00px;font-size:14px;line-height:17.5px;font-weight:400;color:#1a1a1a;letter-spacing:0.228px;left:-479.77px;width:800px;text-align:right;">22.51%</div>
<div class="t k" style="top:856.00px;font-size:14px;line-height:17.5px;font-weight:400;color:#1a1a1a;letter-spacing:-0.08px;left:-359.78px;width:800px;text-align:right;">77.49%</div>
<div class="a" style="left:450.9px;top:850px;width:56px;height:26px;background:#f0dfdf;"></div>
<div class="t " style="top:855.00px;font-size:14px;line-height:17.5px;font-weight:700;color:#b6584f;left:-298.00px;width:800px;text-align:right;">6%</div>
<svg class="a" style="left:462.90px;top:859.50px" width="9" height="5"><path d="M0 0L4.5 5L9 0z" fill="#b0584e"/></svg>
<div class="t k" style="top:856.00px;font-size:14px;line-height:17.5px;font-weight:400;color:#1a1a1a;letter-spacing:-0.36px;left:-81.06px;width:800px;text-align:right;">10,619</div>
<div class="t k" style="top:856.00px;font-size:14px;line-height:17.5px;font-weight:400;color:#1a1a1a;letter-spacing:0.484px;left:131.48px;width:800px;text-align:right;">36,561</div>
<div class="t k" style="top:856.00px;font-size:14px;line-height:17.5px;font-weight:400;color:#1a1a1a;letter-spacing:0.373px;left:331.37px;width:800px;text-align:right;">1,473,397.53</div>
<div class="t k" style="top:856.00px;font-size:14px;line-height:17.5px;font-weight:400;color:#1a1a1a;letter-spacing:0.566px;left:548.57px;width:800px;text-align:right;">2,423,763.41</div>
<div class="t k" style="top:856.00px;font-size:14px;line-height:17.5px;font-weight:400;color:#1a1a1a;letter-spacing:0.372px;left:739.97px;width:800px;text-align:right;">138.75</div>
<div class="t k" style="top:856.00px;font-size:14px;line-height:17.5px;font-weight:400;color:#1a1a1a;letter-spacing:0.854px;left:931.85px;width:800px;text-align:right;">66.29</div>
<div class="a" style="left:13px;top:923px;width:1736px;height:1px;background:#e0e0e0;"></div>
<div class="t k" style="top:896.00px;font-size:14px;line-height:17.5px;font-weight:400;color:#1a1a1a;letter-spacing:0.68px;left:30.80px;">Feb 2025</div>
<div class="t k" style="top:896.00px;font-size:14px;line-height:17.5px;font-weight:400;color:#1a1a1a;letter-spacing:-0.034px;left:-480.03px;width:800px;text-align:right;">17.43%</div>
<div class="t k" style="top:896.00px;font-size:14px;line-height:17.5px;font-weight:400;color:#1a1a1a;letter-spacing:0.392px;left:-359.31px;width:800px;text-align:right;">82.57%</div>
<div class="a" style="left:450.9px;top:890px;width:56px;height:26px;background:#cdebcb;"></div>
<div class="t " style="top:895.00px;font-size:14px;line-height:17.5px;font-weight:700;color:#08a008;left:-298.00px;width:800px;text-align:right;">0%</div>
<svg class="a" style="left:462.90px;top:899.00px" width="9" height="5"><path d="M0 5L4.5 0L9 5z" fill="#047804"/></svg>
<div class="t k" style="top:896.00px;font-size:14px;line-height:17.5px;font-weight:400;color:#1a1a1a;letter-spacing:0.422px;left:-80.28px;width:800px;text-align:right;">7,606</div>
<div class="t k" style="top:896.00px;font-size:14px;line-height:17.5px;font-weight:400;color:#1a1a1a;letter-spacing:0.994px;left:131.99px;width:800px;text-align:right;">36,028</div>
<div class="t k" style="top:896.00px;font-size:14px;line-height:17.5px;font-weight:400;color:#1a1a1a;letter-spacing:0.024px;left:331.02px;width:800px;text-align:right;">1,082,799.15</div>
<div class="t k" style="top:896.00px;font-size:14px;line-height:17.5px;font-weight:400;color:#1a1a1a;letter-spacing:0.463px;left:548.46px;width:800px;text-align:right;">2,291,470.55</div>
<div class="t k" style="top:896.00px;font-size:14px;line-height:17.5px;font-weight:400;color:#1a1a1a;letter-spacing:0.74px;left:740.34px;width:800px;text-align:right;">142.36</div>
<div class="t k" style="top:896.00px;font-size:14px;line-height:17.5px;font-weight:400;color:#1a1a1a;letter-spacing:1.189px;left:932.19px;width:800px;text-align:right;">63.60</div>
<div class="a" style="left:13px;top:962px;width:1736px;height:1px;background:#e0e0e0;"></div>
<div class="t k" style="top:935.00px;font-size:14px;line-height:17.5px;font-weight:400;color:#1a1a1a;letter-spacing:0.68px;left:30.80px;">Jan 2025</div>
<div class="t k" style="top:935.00px;font-size:14px;line-height:17.5px;font-weight:400;color:#1a1a1a;letter-spacing:-0.166px;left:-480.17px;width:800px;text-align:right;">17.64%</div>
<div class="t k" style="top:935.00px;font-size:14px;line-height:17.5px;font-weight:400;color:#1a1a1a;letter-spacing:0.698px;left:-359.00px;width:800px;text-align:right;">82.36%</div>
<div class="a" style="left:450.9px;top:929px;width:56px;height:26px;background:#cdebcb;"></div>
<div class="t " style="top:934.00px;font-size:14px;line-height:17.5px;font-weight:700;color:#08a008;left:-298.00px;width:800px;text-align:right;">6%</div>
<svg class="a" style="left:462.90px;top:938.50px" width="9" height="5"><path d="M0 5L4.5 0L9 5z" fill="#047804"/></svg>
<div class="t k" style="top:935.00px;font-size:14px;line-height:17.5px;font-weight:400;color:#1a1a1a;letter-spacing:0.187px;left:-80.51px;width:800px;text-align:right;">8,978</div>
<div class="t k" style="top:935.00px;font-size:14px;line-height:17.5px;font-weight:400;color:#1a1a1a;letter-spacing:0.16px;left:131.16px;width:800px;text-align:right;">41,929</div>
<div class="t k" style="top:935.00px;font-size:14px;line-height:17.5px;font-weight:400;color:#1a1a1a;letter-spacing:0.162px;left:331.16px;width:800px;text-align:right;">1,299,033.19</div>
<div class="t k" style="top:935.00px;font-size:14px;line-height:17.5px;font-weight:400;color:#1a1a1a;letter-spacing:0.928px;left:548.93px;width:800px;text-align:right;">2,640,328.03</div>
<div class="t k" style="top:935.00px;font-size:14px;line-height:17.5px;font-weight:400;color:#1a1a1a;letter-spacing:0.56px;left:740.16px;width:800px;text-align:right;">144.69</div>
<div class="t k" style="top:935.00px;font-size:14px;line-height:17.5px;font-weight:400;color:#1a1a1a;letter-spacing:0.482px;left:931.48px;width:800px;text-align:right;">62.97</div>
<div class="a" style="left:13px;top:1002px;width:1736px;height:1px;background:#e0e0e0;"></div>
<div class="t k" style="top:975.00px;font-size:14px;line-height:17.5px;font-weight:400;color:#1a1a1a;letter-spacing:0.68px;left:30.80px;">Dec 2024</div>
<div class="t k" style="top:975.00px;font-size:14px;line-height:17.5px;font-weight:400;color:#1a1a1a;letter-spacing:0.816px;left:-479.18px;width:800px;text-align:right;">22.42%</div>
<div class="t k" style="top:975.00px;font-size:14px;line-height:17.5px;font-weight:400;color:#1a1a1a;letter-spacing:0.038px;left:-359.66px;width:800px;text-align:right;">77.58%</div>
<div class="a" style="left:450.9px;top:969px;width:56px;height:26px;background:#cdebcb;"></div>
<div class="t " style="top:974.00px;font-size:14px;line-height:17.5px;font-weight:700;color:#08a008;left:-298.00px;width:800px;text-align:right;">2%</div>
<svg class="a" style="left:462.90px;top:978.00px" width="9" height="5"><path d="M0 5L4.5 0L9 5z" fill="#047804"/></svg>
<div class="t k" style="top:975.00px;font-size:14px;line-height:17.5px;font-weight:400;color:#1a1a1a;letter-spacing:-0.098px;left:-80.80px;width:800px;text-align:right;">13,812</div>
<div class="t k" style="top:975.00px;font-size:14px;line-height:17.5px;font-weight:400;color:#1a1a1a;letter-spacing:0.772px;left:131.77px;width:800px;text-align:right;">47,805</div>
<div class="t k" style="top:975.00px;font-size:14px;line-height:17.5px;font-weight:400;color:#1a1a1a;letter-spacing:0.649px;left:331.65px;width:800px;text-align:right;">2,130,252.26</div>
<div class="t k" style="top:975.00px;font-size:14px;line-height:17.5px;font-weight:400;color:#1a1a1a;letter-spacing:0.77px;left:548.77px;width:800px;text-align:right;">3,462,040.67</div>
<div class="t k" style="top:975.00px;font-size:14px;line-height:17.5px;font-weight:400;color:#1a1a1a;letter-spacing:0.864px;left:740.46px;width:800px;text-align:right;">154.23</div>
<div class="t k" style="top:975.00px;font-size:14px;line-height:17.5px;font-weight:400;color:#1a1a1a;letter-spacing:0.892px;left:931.89px;width:800px;text-align:right;">72.42</div>
<div class="a" style="left:13px;top:1042px;width:1736px;height:1px;background:#e0e0e0;"></div>
<div class="t k" style="top:1015.00px;font-size:14px;line-height:17.5px;font-weight:400;color:#1a1a1a;letter-spacing:0.68px;left:30.80px;">Nov 2024</div>
<div class="t k" style="top:1015.00px;font-size:14px;line-height:17.5px;font-weight:400;color:#1a1a1a;letter-spacing:0.9px;left:-479.10px;width:800px;text-align:right;">24.24%</div>
<div class="t k" style="top:1015.00px;font-size:14px;line-height:17.5px;font-weight:400;color:#1a1a1a;letter-spacing:0.036px;left:-359.66px;width:800px;text-align:right;">75.76%</div>
<div class="a" style="left:442.9px;top:1009px;width:64px;height:26px;background:#f0dfdf;"></div>
<div class="t " style="top:1014.00px;font-size:14px;line-height:17.5px;font-weight:700;color:#b6584f;left:-298.00px;width:800px;text-align:right;">10%</div>
<svg class="a" style="left:454.90px;top:1018.00px" width="9" height="5"><path d="M0 0L4.5 5L9 0z" fill="#b0584e"/></svg>
<div class="t k" style="top:1015.00px;font-size:14px;line-height:17.5px;font-weight:400;color:#1a1a1a;letter-spacing:0.354px;left:-80.35px;width:800px;text-align:right;">15,398</div>
<div class="t k" style="top:1015.00px;font-size:14px;line-height:17.5px;font-weight:400;color:#1a1a1a;letter-spacing:0.128px;left:131.13px;width:800px;text-align:right;">48,127</div>
<div class="t k" style="top:1015.00px;font-size:14px;line-height:17.5px;font-weight:400;color:#1a1a1a;letter-spacing:0.754px;left:331.75px;width:800px;text-align:right;">2,236,300.27</div>
<div class="t k" style="top:1015.00px;font-size:14px;line-height:17.5px;font-weight:400;color:#1a1a1a;letter-spacing:0.995px;left:549.00px;width:800px;text-align:right;">3,443,582.60</div>
<div class="t k" style="top:1015.00px;font-size:14px;line-height:17.5px;font-weight:400;color:#1a1a1a;letter-spacing:0.864px;left:740.46px;width:800px;text-align:right;">145.23</div>
<div class="t k" style="top:1015.00px;font-size:14px;line-height:17.5px;font-weight:400;color:#1a1a1a;letter-spacing:0.242px;left:931.24px;width:800px;text-align:right;">71.55</div>
<div class="t k" style="top:1055.00px;font-size:14px;line-height:17.5px;font-weight:400;color:#1a1a1a;letter-spacing:0.68px;left:30.80px;">Oct 2024</div>
<div class="t k" style="top:1055.00px;font-size:14px;line-height:17.5px;font-weight:400;color:#1a1a1a;letter-spacing:0.116px;left:-479.88px;width:800px;text-align:right;">15.66%</div>
<div class="t k" style="top:1055.00px;font-size:14px;line-height:17.5px;font-weight:400;color:#1a1a1a;letter-spacing:0.922px;left:-358.78px;width:800px;text-align:right;">84.34%</div>
<div class="t " style="top:1055.00px;font-size:14px;line-height:17.5px;font-weight:700;color:#1a1a1a;letter-spacing:2.106px;left:-295.89px;width:800px;text-align:right;">---</div>
<div class="t k" style="top:1055.00px;font-size:14px;line-height:17.5px;font-weight:400;color:#1a1a1a;letter-spacing:0.192px;left:-80.51px;width:800px;text-align:right;">9,479</div>
<div class="t k" style="top:1055.00px;font-size:14px;line-height:17.5px;font-weight:400;color:#1a1a1a;letter-spacing:0.246px;left:131.25px;width:800px;text-align:right;">51,037</div>
<div class="t k" style="top:1055.00px;font-size:14px;line-height:17.5px;font-weight:400;color:#1a1a1a;letter-spacing:0.301px;left:331.30px;width:800px;text-align:right;">1,418,646.49</div>
<div class="t k" style="top:1055.00px;font-size:14px;line-height:17.5px;font-weight:400;color:#1a1a1a;letter-spacing:0.599px;left:548.60px;width:800px;text-align:right;">3,322,376.87</div>
<div class="t k" style="top:1055.00px;font-size:14px;line-height:17.5px;font-weight:400;color:#1a1a1a;letter-spacing:0.42px;left:740.02px;width:800px;text-align:right;">149.66</div>
<div class="t k" style="top:1055.00px;font-size:14px;line-height:17.5px;font-weight:400;color:#1a1a1a;letter-spacing:0.534px;left:931.53px;width:800px;text-align:right;">65.10</div>
</body></html>
